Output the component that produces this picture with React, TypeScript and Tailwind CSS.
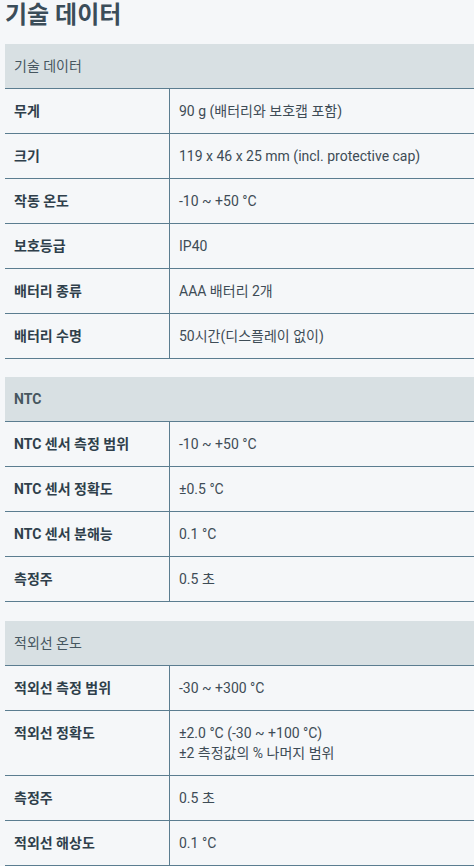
import React from "react";

type Row = { label: string; value: string[] };
type Section = { title: string; boldTitle?: boolean; rows: Row[]; className: string };

const sections: Section[] = [
  {
    title: "기술 데이터",
    className: "",
    rows: [
      { label: "무게", value: ["90 g (배터리와 보호캡 포함)"] },
      { label: "크기", value: ["119 x 46 x 25 mm (incl. protective cap)"] },
      { label: "작동 온도", value: ["-10 ~ +50 °C"] },
      { label: "보호등급", value: ["IP40"] },
      { label: "배터리 종류", value: ["AAA 배터리 2개"] },
      { label: "배터리 수명", value: ["50시간(디스플레이 없이)"] },
    ],
  },
  {
    title: "NTC",
    boldTitle: true,
    className: "mt-[18px]",
    rows: [
      { label: "NTC 센서 측정 범위", value: ["-10 ~ +50 °C"] },
      { label: "NTC 센서 정확도", value: ["±0.5 °C"] },
      { label: "NTC 센서 분해능", value: ["0.1 °C"] },
      { label: "측정주", value: ["0.5 초"] },
    ],
  },
  {
    title: "적외선 온도",
    className: "mt-[19px]",
    rows: [
      { label: "적외선 측정 범위", value: ["-30 ~ +300 °C"] },
      { label: "적외선 정확도", value: ["±2.0 °C (-30 ~ +100 °C)", "±2 측정값의 % 나머지 범위"] },
      { label: "측정주", value: ["0.5 초"] },
      { label: "적외선 해상도", value: ["0.1 °C"] },
    ],
  },
];

export default function App() {
  return (
    <div
      className="min-h-[866px] w-[474px] overflow-hidden bg-[#f5f7f9] text-[14px] leading-[20px]"
      style={{ fontFamily: 'Roboto, "Noto Sans CJK KR", sans-serif' }}
    >
      <h1 className="pl-[5px] text-[24px] font-bold leading-[31px] text-[#3b4d59]">기술 데이터</h1>
      <div className="ml-[5px] mt-[13px] w-[469px]">
        {sections.map((s) => (
          <div key={s.title} className={s.className}>
            <div
              className={`flex h-[45px] items-center border-b border-[#5b7d90] bg-[#d8e0e3] pl-[9px] text-[#46565f] ${
                s.boldTitle ? "font-bold" : "font-normal"
              }`}
            >
              {s.title}
            </div>
            {s.rows.map((r) => (
              <div key={r.label} className="flex border-b border-[#5b7d90]">
                <div className="w-[165px] shrink-0 border-r border-[#5b7d90] py-[12px] pl-[9px] font-bold text-[#2f3f4b]">
                  {r.label}
                </div>
                <div className="flex-1 py-[12px] pl-[9px] text-[#3e4c56]">
                  {r.value.map((v) => (
                    <div key={v}>{v}</div>
                  ))}
                </div>
              </div>
            ))}
          </div>
        ))}
      </div>
    </div>
  );
}
